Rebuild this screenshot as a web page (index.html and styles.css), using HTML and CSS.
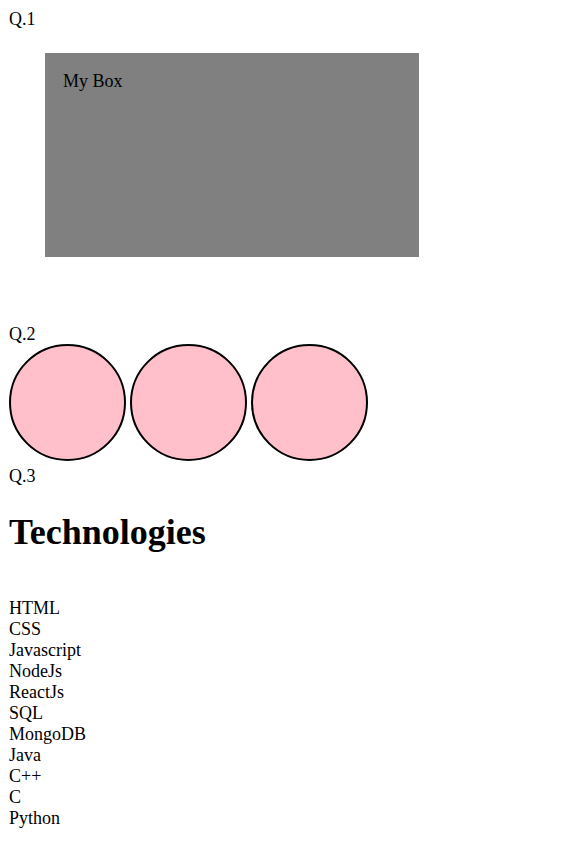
FILE: index.html
```html
<!DOCTYPE html>
<html>
<head>
<meta charset="utf-8">
<link rel="stylesheet" href="styles.css">
</head>
<body>
<div class="q">Q.1</div>
<div class="box">My Box</div>
<div class="q q2">Q.2</div>
<div class="circles">
  <div class="circle"></div>
  <div class="circle"></div>
  <div class="circle"></div>
</div>
<div class="q">Q.3</div>
<h1 class="title">Technologies</h1>
<ul class="tech">
  <li>HTML</li>
  <li>CSS</li>
  <li>Javascript</li>
  <li>NodeJs</li>
  <li>ReactJs</li>
  <li>SQL</li>
  <li>MongoDB</li>
  <li>Java</li>
  <li>C++</li>
  <li>C</li>
  <li>Python</li>
</ul>
</body>
</html>
```

FILE: styles.css
```css
html, body {
  background: #ffffff;
}
body {
  margin: 9px;
  font-family: "Liberation Serif", "Times New Roman", serif;
  font-size: 18px;
  line-height: 21px;
  color: #000000;
}
.q {
  height: 21px;
}
.box {
  box-sizing: border-box;
  width: 374px;
  height: 204px;
  margin: 23px 0 0 36px;
  padding: 18px 18px;
  background: #808080;
}
.q2 {
  margin-top: 67px;
  height: 20px;
}
.circles {
  display: flex;
  gap: 4px;
  margin-bottom: 5px;
}
.circle {
  box-sizing: border-box;
  width: 117px;
  height: 117px;
  border: 2px solid #000000;
  border-radius: 50%;
  background: #ffc0cb;
}
.title {
  margin: 25px 0 0;
  font-size: 36px;
  line-height: 40px;
  font-weight: bold;
}
.tech {
  list-style: none;
  margin: 46px 0 0;
  padding: 0;
}
```
